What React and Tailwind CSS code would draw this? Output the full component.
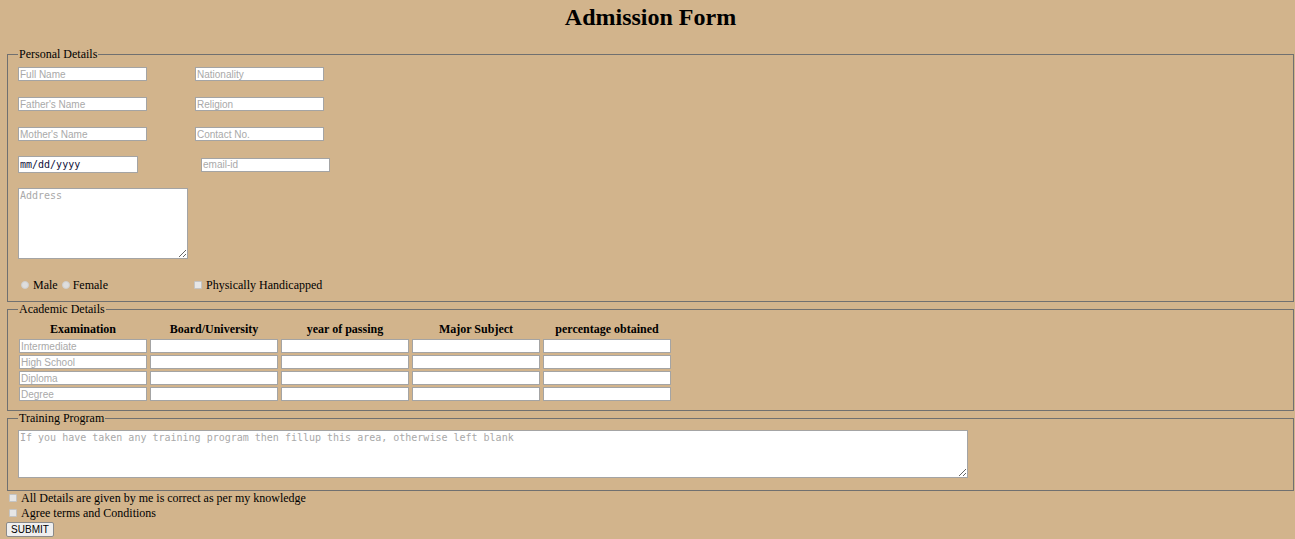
import React from 'react';

const sans = "font-['Liberation_Sans',Arial,sans-serif]";
const mono = "font-['DejaVu_Sans_Mono',monospace]";

const Field = ({ placeholder, className = '' }) => (
  <input
    type="text"
    placeholder={placeholder}
    className={`block h-[14px] border border-[#a4a4a4] bg-white px-[1px] py-0 text-[10px] leading-[12px] text-black outline-none placeholder:text-[#a9a9a9] ${sans} ${className}`}
  />
);

const Radio = ({ name, className = '' }) => (
  <input
    type="radio"
    name={name}
    className={`appearance-none w-[8px] h-[8px] rounded-full border border-[#cfcfcf] bg-[#dedede] shrink-0 ${className}`}
  />
);

const Check = ({ className = '' }) => (
  <input
    type="checkbox"
    className={`appearance-none w-[8px] h-[8px] rounded-[1px] border border-[#c4c4c4] bg-[#e6e6e6] shrink-0 ${className}`}
  />
);

const exams = ['Intermediate', 'High School', 'Diploma', 'Degree'];
const headers = ['Examination', 'Board/University', 'year of passing', 'Major Subject', 'percentage obtained'];

const App = () => {
  return (
    <div className="min-h-screen w-full bg-[#d2b48c] px-[6px] text-[12px] leading-[14px] text-black font-['Liberation_Serif','Times_New_Roman',serif]">
      <h1 className="pt-[3px] pl-[6px] text-center text-[24px] leading-[28px] font-bold">Admission Form</h1>

      {/* Personal details */}
      <fieldset className="mt-[16px] ml-[1px] w-[1287px] border border-[#707070] px-[10px] pt-[6px] pb-[8px]">
        <legend className="px-[1px] leading-[14px]">Personal Details</legend>
        <div className="flex flex-col">
          <div className="flex gap-[48px]">
            <Field placeholder="Full Name" className="w-[129px]" />
            <Field placeholder="Nationality" className="w-[129px]" />
          </div>
          <div className="flex gap-[48px] mt-[16px]">
            <Field placeholder="Father's Name" className="w-[129px]" />
            <Field placeholder="Religion" className="w-[129px]" />
          </div>
          <div className="flex gap-[48px] mt-[16px]">
            <Field placeholder="Mother's Name" className="w-[129px]" />
            <Field placeholder="Contact No." className="w-[129px]" />
          </div>
          <div className="flex items-center mt-[15px] h-[17px]">
            <input
              type="text"
              readOnly
              value="mm/dd/yyyy"
              className={`block w-[120px] h-[17px] border border-[#a4a4a4] bg-white px-[1px] text-[10px] leading-[12px] text-[#10103a] outline-none ${mono}`}
            />
            <Field placeholder="email-id" className="ml-[63px] w-[129px]" />
          </div>
          <textarea
            placeholder="Address"
            className={`block mt-[15px] w-[170px] h-[71px] border border-[#a4a4a4] bg-white px-[1px] py-[1px] text-[10px] leading-[12px] outline-none placeholder:text-[#a9a9a9] ${mono}`}
          />
          <div className="flex items-center mt-[18px] h-[16px]">
            <Radio name="gender" className="ml-[3px]" />
            <span className="ml-[4px]">Male</span>
            <Radio name="gender" className="ml-[4px]" />
            <span className="ml-[3px]">Female</span>
            <Check className="ml-[86px]" />
            <span className="ml-[4px]">Physically Handicapped</span>
          </div>
        </div>
      </fieldset>

      {/* Academic details */}
      <fieldset className="ml-[1px] w-[1287px] border border-[#707070] px-[10px] pt-[6px] pb-[9px]">
        <legend className="px-[1px] leading-[14px]">Academic Details</legend>
        <div className="ml-[1px] grid grid-cols-[128px_128px_128px_128px_128px] gap-x-[3px]">
          {headers.map((h) => (
            <div key={h} className="h-[14px] text-center font-bold leading-[14px]">{h}</div>
          ))}
        </div>
        <div className="ml-[1px] mt-[3px] grid grid-cols-[128px_128px_128px_128px_128px] gap-x-[3px] gap-y-[2px]">
          {exams.map((ex) => (
            <React.Fragment key={ex}>
              <Field placeholder={ex} className="w-[128px]" />
              <Field className="w-[128px]" />
              <Field className="w-[128px]" />
              <Field className="w-[128px]" />
              <Field className="w-[128px]" />
            </React.Fragment>
          ))}
        </div>
      </fieldset>

      {/* Training program */}
      <fieldset className="ml-[1px] w-[1287px] border border-[#707070] px-[10px] pt-[5px] pb-[12px]">
        <legend className="px-[1px] leading-[14px]">Training Program</legend>
        <textarea
          placeholder="If you have taken any training program then fillup this area, otherwise left blank"
          className={`block w-[950px] h-[48px] border border-[#a4a4a4] bg-white px-[1px] py-[1px] text-[10px] leading-[12px] outline-none placeholder:text-[#a9a9a9] ${mono}`}
        />
      </fieldset>

      <div className="flex items-center h-[14px]">
        <Check className="ml-[3px]" />
        <span className="ml-[4px]">All Details are given by me is correct as per my knowledge</span>
      </div>
      <div className="flex items-center h-[15px] pt-[1px]">
        <Check className="ml-[3px]" />
        <span className="ml-[4px]">Agree terms and Conditions</span>
      </div>
      <button
        type="submit"
        className={`mt-[2px] block w-[48px] h-[15px] rounded-[2px] border border-[#8a8a8a] bg-[#efefef] text-[10px] leading-[13px] text-black ${sans}`}
      >
        SUBMIT
      </button>
    </div>
  );
};

export default App;
